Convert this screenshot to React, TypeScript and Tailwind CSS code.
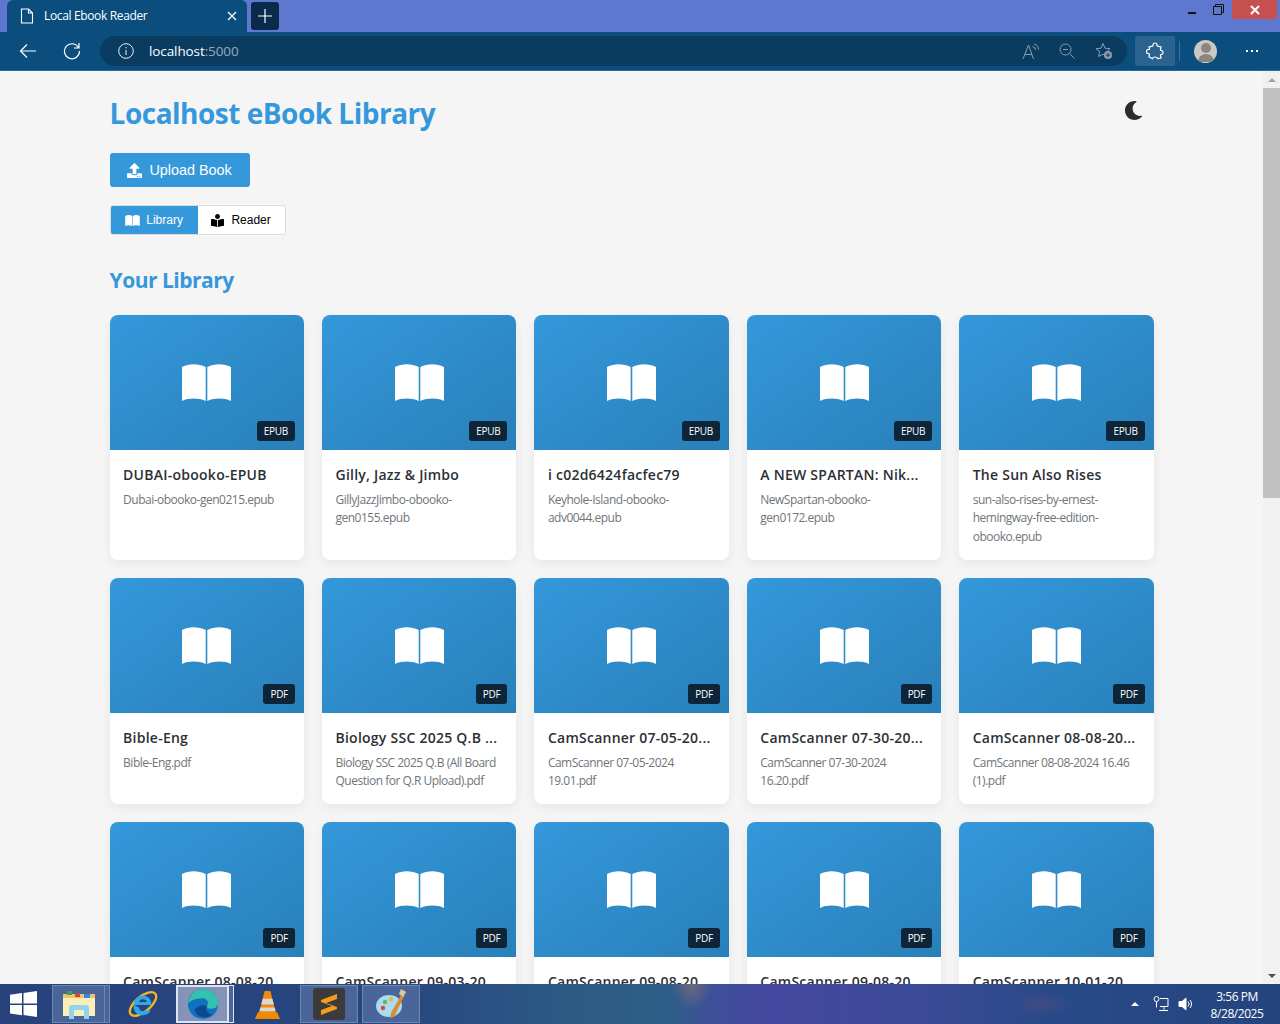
import React from "react";
import { FaBookReader, FaMoon, FaUpload } from "react-icons/fa";

const books = [
  { t: "DUBAI-obooko-EPUB", f: ["Dubai-obooko-gen0215.epub"], k: "EPUB" },
  { t: "Gilly, Jazz & Jimbo", f: ["GillyJazzJimbo-obooko-", "gen0155.epub"], k: "EPUB" },
  { t: "i c02d6424facfec79", f: ["Keyhole-Island-obooko-", "adv0044.epub"], k: "EPUB" },
  { t: "A NEW SPARTAN: Nik...", f: ["NewSpartan-obooko-", "gen0172.epub"], k: "EPUB" },
  { t: "The Sun Also Rises", f: ["sun-also-rises-by-ernest-", "hemingway-free-edition-", "obooko.epub"], k: "EPUB" },
  { t: "Bible-Eng", f: ["Bible-Eng.pdf"], k: "PDF" },
  { t: "Biology SSC 2025 Q.B ...", f: ["Biology SSC 2025 Q.B (All Board", "Question for Q.R Upload).pdf"], k: "PDF" },
  { t: "CamScanner 07-05-20...", f: ["CamScanner 07-05-2024", "19.01.pdf"], k: "PDF" },
  { t: "CamScanner 07-30-20...", f: ["CamScanner 07-30-2024", "16.20.pdf"], k: "PDF" },
  { t: "CamScanner 08-08-20...", f: ["CamScanner 08-08-2024 16.46", "(1).pdf"], k: "PDF" },
  { t: "CamScanner 08-08-20...", f: ["CamScanner 08-08-2024", "16.46.pdf"], k: "PDF" },
  { t: "CamScanner 09-03-20...", f: ["CamScanner 09-03-2024", "10.12.pdf"], k: "PDF" },
  { t: "CamScanner 09-08-20...", f: ["CamScanner 09-08-2024", "11.30.pdf"], k: "PDF" },
  { t: "CamScanner 09-08-20...", f: ["CamScanner 09-08-2024", "11.45.pdf"], k: "PDF" },
  { t: "CamScanner 10-01-20...", f: ["CamScanner 10-01-2024", "09.20.pdf"], k: "PDF" },
];

function BookIcon({ w, h }: { w: number; h: number }) {
  return (
    <svg width={w} height={h} viewBox="0 0 49 37" fill="white">
      <path d="M0 3C7 -.6 16 -.8 23.700 3V37C16 33.800 7 33.800 0 37Z" />
      <path d="M49 3C42 -.6 33 -.8 25.300 3V37C33 33.800 42 33.800 49 37Z" />
    </svg>
  );
}

function Card({ b }: { b: (typeof books)[number] }) {
  return (
    <div className="flex flex-col overflow-hidden rounded-lg bg-white shadow-[0_4px_12px_rgba(0,0,0,0.06)]">
      <div className="relative flex h-[135px] items-center justify-center bg-gradient-to-br from-[#3498db] to-[#2980b9]">
        <BookIcon w={49} h={37} />
        <span className="absolute bottom-[9px] right-[9px] rounded-[3px] bg-[#0e2539] px-[7px] py-[3px] text-[10px] leading-[14px] tracking-[-0.3px] text-white">{b.k}</span>
      </div>
      <div className="flex-1 pb-[13.500px] pl-[13.500px] pr-[10px] pt-[14px]">
        <div className="whitespace-nowrap text-[14px] font-semibold leading-[22px] tracking-[0.25px] text-[#2c3035]">{b.t}</div>
        <div className="mt-[4.800px] text-[12px] leading-[18.500px] tracking-[-0.5px] text-[#70757a]">
          {b.f.map((l, i) => (
            <div key={i} className="whitespace-nowrap">{l}</div>
          ))}
        </div>
      </div>
    </div>
  );
}

function Chrome() {
  return (
    <header className="shrink-0">
      <div className="flex h-[32px] items-end bg-[#5f78cf] pl-[7px] pr-[3px]">
        <div className="flex h-[32px] w-[240px] items-center rounded-t-[6px] bg-[#0b4e7e] pl-[13px] pr-[10px] text-[12px] text-white">
          <svg width="14" height="16" viewBox="0 0 14 16" fill="none" stroke="white" strokeWidth="1.1" className="mr-[10px]">
            <path d="M1.500 1h7l4 4v10h-11zM8.500 1v4h4" />
          </svg>
          <span className="flex-1 tracking-[-0.35px]">Local Ebook Reader</span>
          <svg width="10" height="10" viewBox="0 0 10 10" stroke="white" strokeWidth="1.3">
            <path d="M1 1l8 8M9 1l-8 8" />
          </svg>
        </div>
        <div className="mb-[2px] ml-[4px] flex h-[28px] w-[28px] items-center justify-center rounded-[3px] bg-[#0a2a4b]">
          <svg width="16" height="16" viewBox="0 0 16 16" stroke="white" strokeWidth="1.2"><path d="M8 1v14M1 8h14" /></svg>
        </div>
        <div className="flex-1" />
        <div className="flex h-[32px] items-start">
          <div className="flex h-[19px] w-[47px] items-center justify-center pl-[23px] pt-[6px]">
            <div className="h-[2px] w-[8px] bg-[#111]" />
          </div>
          <div className="flex h-[19px] w-[28px] items-center justify-center">
            <svg width="11" height="11" viewBox="0 0 11 11" fill="none" stroke="#111"><path d="M.5 2.500h8v8h-8zM2.500 2.500v-2h8v8h-2" /></svg>
          </div>
          <div className="flex h-[19px] w-[45px] items-center justify-center bg-[#c75050]">
            <svg width="10" height="10" viewBox="0 0 10 10" stroke="white" strokeWidth="2"><path d="M1 1l8 8M9 1l-8 8" /></svg>
          </div>
        </div>
      </div>
      <div className="flex h-[39px] items-center border-b-[1px] border-[#2a6a99] bg-[#0b4e7e]">
        <div className="flex w-[100px] items-center pl-[19px]">
          <svg width="18" height="16" viewBox="0 0 18 16" fill="none" stroke="white" strokeWidth="1.2"><path d="M17 8H1.500M8 1.500L1.500 8 8 14.500" /></svg>
          <svg width="18" height="18" viewBox="0 0 18 18" fill="none" stroke="white" strokeWidth="1.2" className="ml-[26px]">
            <path d="M15.500 5.500A7.500 7.500 0 1 0 16.500 9M16 1v5h-5" />
          </svg>
        </div>
        <div className="flex h-[30px] w-[1027px] items-center rounded-full bg-[#0a3c62] pl-[18px] pr-[14px]">
          <svg width="16" height="16" viewBox="0 0 16 16" fill="none" stroke="#e8eef3" strokeWidth="1"><circle cx="8" cy="8" r="7.300" /><path d="M8 7v5M8 4v1.400" /></svg>
          <span className="ml-[15px] flex-1 text-[13.500px] leading-[20px] tracking-[-0.1px] text-white">localhost<span className="text-[#9aa8b4]">:5000</span></span>
          <svg width="18" height="17" viewBox="0 0 18 17" fill="none" stroke="#8c9eae" strokeWidth="1"><path d="M1 16L6.500 2l5 14M2.900 11.500h7.200M10.500 3.500a3.500 3.500 0 0 1 3 3.500M12 1a6 6 0 0 1 4.500 5.500" /></svg>
          <svg width="16" height="16" viewBox="0 0 16 16" fill="none" stroke="#8c9eae" strokeWidth="1" className="ml-[19px]"><circle cx="6.500" cy="6.500" r="5.500" /><path d="M4 6.500h5M10.500 10.500l5 5" /></svg>
          <svg width="18" height="18" viewBox="0 0 18 18" fill="none" stroke="#8c9eae" strokeWidth="1" className="ml-[20px]">
            <path d="M8 1.500l2 4.700 5 .5-3.700 3.300 1 5L8 12.200 3.600 14.500l1-5L1 6.700l5-.5z" />
            <circle cx="13" cy="13" r="4" fill="#8c9eae" stroke="none" />
            <path d="M13 10.800v4.400M10.800 13h4.400" stroke="#0a3c62" />
          </svg>
        </div>
        <div className="ml-[8px] flex h-[30px] w-[40px] items-center justify-center rounded-[2px] bg-[#2a6290]">
          <svg width="18" height="18" viewBox="0 0 18 18" fill="none" stroke="white" strokeWidth="1.200">
            <path d="M7 3a2 2 0 0 1 4 0c0 .5 0 1 .5 1.200L15 5l-.6 3c.3.5.8.6 1.300.6a2 2 0 0 1 0 3.800c-.5 0-1 .1-1.300.6l.6 3-3.500.6c-.5-1.200-1.200-1.600-2.500-1.600s-2.200.6-2.500 1.600L3 15l.5-2.600C3.400 12 3 11.700 2.500 11.700a2.100 2.100 0 0 1 0-4.200c.5 0 .9-.2 1-.7L3 5l3.500-.8C7 4 7 3.500 7 3z" />
          </svg>
        </div>
        <div className="ml-[4px] h-[20px] w-[1px] bg-[#3c7197]" />
        <div className="ml-[14px] flex h-[23px] w-[23px] items-end justify-center overflow-hidden rounded-full bg-[#ccc9c5]">
          <div className="flex h-[20px] w-[16px] flex-col items-center">
            <div className="h-[10px] w-[10px] rounded-full bg-[#8b8681]" />
            <div className="mt-[1px] h-[8px] w-[16px] rounded-t-full bg-[#8b8681]" />
          </div>
        </div>
        <div className="ml-[29px] flex gap-[3px]">
          <div className="h-[2px] w-[2px] bg-white" />
          <div className="h-[2px] w-[2px] bg-white" />
          <div className="h-[2px] w-[2px] bg-white" />
        </div>
      </div>
    </header>
  );
}

function Scrollbar() {
  return (
    <div className="flex w-[17px] shrink-0 flex-col items-center bg-[#f1f1f1]">
      <div className="flex h-[17px] items-center">
        <div className="h-0 w-0 border-x-[4px] border-b-[4px] border-x-transparent border-b-[#a3a3a3]" />
      </div>
      <div className="h-[410px] w-full bg-[#c1c1c1]" />
      <div className="flex-1" />
      <div className="flex h-[17px] items-center">
        <div className="h-0 w-0 border-x-[4px] border-t-[4px] border-x-transparent border-t-[#505050]" />
      </div>
    </div>
  );
}

const slot = "flex h-[38px] shrink-0 items-center justify-center";
const pinned = "border border-[#6f86ad] bg-[#49659a]";

function Taskbar() {
  return (
    <footer className="flex h-[40px] shrink-0 items-center bg-[radial-gradient(ellipse_20px_26px_at_692px_0px,#a07a6e88,transparent),radial-gradient(ellipse_30px_12px_at_1042px_20px,#8a4f7a44,transparent),linear-gradient(90deg,#28427c_0%,#28457f_30%,#2b5a85_44%,#2e5f88_52%,#3d4f98_55.500%,#4448a0_60%,#3c4a98_72%,#284a88_82%,#24447e_100%)]">
      <div className="flex w-[52px] shrink-0 items-center justify-center pr-[4px]">
        <svg width="28" height="26" viewBox="0 0 28 26" fill="white"><path d="M0 3.800l12-1.700v10.400H0zM13.500 1.900L27 0v12.500H13.500zM0 14h12v10.300L0 22.600zM13.500 14H27v12l-13.500-1.900z" /></svg>
      </div>
      <div className={`${slot} ${pinned} w-[53px]`}>
        <svg width="34" height="32" viewBox="0 0 34 32">
          <path d="M1 6h32v22H1z" fill="#e9c66e" />
          <path d="M1 10h32v18H1z" fill="#fbeeb8" />
          <path d="M5 3h5v4H5z" fill="#3fa34d" /><path d="M13 5h5v4h-5z" fill="#c9483c" /><path d="M22 6h6v4h-6z" fill="#3b86d8" />
          <path d="M7 31V20a3 3 0 0 1 3-3h14a3 3 0 0 1 3 3v11h-5v-9H12v9z" fill="#8fd4f0" />
        </svg>
      </div>
      <div className="h-[38px] w-[5px] shrink-0 border border-l-0 border-[#6f86ad] bg-[#49659a]" />
      <div className={`${slot} w-[66px]`}>
        <svg width="32" height="34" viewBox="0 0 34 34" fill="none">
          <ellipse cx="17" cy="17" rx="17" ry="8" transform="rotate(-40 17 17)" stroke="#f2b91f" strokeWidth="2.500" />
          <path d="M8 18h18c0-6-4-10-9-10S7 12 7 19s5 10 10 10c4 0 7-2 8-5h-6c-1 1-5 1-6-2v-1z" fill="#2fa8e8" />
          <path d="M13 15c0-2 2-3 4-3s4 1 4 3z" fill="#28427c" />
        </svg>
      </div>
      <div className={`${slot} w-[53px] border-2 border-[#dfe5ee] bg-[#8494b8]`}>
        <svg width="32" height="32" viewBox="0 0 34 34">
          <circle cx="17" cy="17" r="16" fill="#1173bf" />
          <path d="M1 17C2 7 9 1 17 1c9 0 16 7 16 15 0 4-3 6-7 6-3 0-5-1-5-3 3-3 1-8-5-8-7 0-13 3-15 6z" fill="#35c1b0" />
          <path d="M21 19c-2 5 2 9 6 9-6 6-17 3-19-5 3-4 9-6 13-4z" fill="#0b4a8f" />
        </svg>
      </div>
      <div className="h-[38px] w-[5px] shrink-0 border border-l-0 border-[#dfe5ee] bg-[#49659a]" />
      <div className={`${slot} w-[66px]`}>
        <svg width="27" height="31" viewBox="0 0 28 32">
          <path d="M1 31l3-7h20l3 7z" fill="#f08a00" />
          <path d="M11 2h6l6 24H5z" fill="#f58a07" />
          <path d="M9 10h10l1.700 6H7.500zM6.500 19h15l1 4h-17z" fill="#d8d8d8" />
        </svg>
      </div>
      <div className={`${slot} ${pinned} w-[58px]`}>
        <div className="flex h-[32px] w-[32px] items-center justify-center rounded-[3px] bg-[#3b3b3b]">
          <svg width="18" height="22" viewBox="0 0 18 22" fill="#f89a1c"><path d="M1 7l16-6v5L6 10l11 4v2L1 22v-5l11-4L1 9z" /></svg>
        </div>
      </div>
      <div className={`${slot} ${pinned} ml-[4px] w-[58px]`}>
        <svg width="32" height="32" viewBox="0 0 32 32">
          <ellipse cx="14" cy="18" rx="13" ry="11" fill="#a9dcf0" />
          <circle cx="8" cy="20" r="2.200" fill="#d9483c" /><circle cx="10" cy="14" r="2.200" fill="#6cb84c" /><circle cx="16" cy="11" r="2.200" fill="#e8b92c" />
          <path d="M29 2l2 2-12 25-4 1 1-5z" fill="#e08a2c" />
          <path d="M26 1l5 3-3 5-4-3z" fill="#d8c8a0" />
        </svg>
      </div>
      <div className="flex-1" />
      <div className="flex items-center pr-[8px]">
        <div className="h-0 w-0 border-x-[4px] border-b-[4px] border-x-transparent border-b-white" />
        <svg width="16" height="16" viewBox="0 0 16 16" fill="none" stroke="white" className="ml-[14px]">
          <circle cx="3.500" cy="3" r="2.500" fill="#28427c" /><path d="M3.500 5.500v6M7 2.500h8v8H7M11 10.500v3M6 14.500h9" />
        </svg>
        <svg width="16" height="14" viewBox="0 0 16 14" fill="none" stroke="white" className="ml-[9px]">
          <path d="M1 4.500h3L8 1v12L4 9.500H1z" fill="white" /><path d="M10 4.500a3.500 3.500 0 0 1 0 5M12 3a6 6 0 0 1 0 8" />
        </svg>
        <div className="ml-[8px] w-[70px] pt-[2px] text-center font-['Open_Sans',sans-serif] text-[12px] leading-[17px] tracking-[-0.45px] text-white">
          <div>3:56 PM</div>
          <div>8/28/2025</div>
        </div>
      </div>
    </footer>
  );
}

export default function App() {
  return (
    <div className="flex h-[1024px] w-[1280px] flex-col overflow-hidden bg-[#f5f5f5] font-['Open_Sans','Noto_Sans',sans-serif]">
      <Chrome />
      <div className="flex min-h-0 flex-1">
        <main className="min-w-0 flex-1 overflow-hidden pl-[109.600px] pr-[109.400px]">
          <div className="flex items-start justify-between pt-[20px]">
            <h1 className="text-[28px] font-bold leading-[45px] tracking-[-0.5px] text-[#3498db]">Localhost eBook Library</h1>
            <FaMoon className="mr-[11px] mt-[10px] text-[19px] text-[#2c2c2c]" />
          </div>
          <button className="mt-[17px] flex h-[34px] w-[140px] items-center justify-center gap-[7px] rounded-[3px] bg-[#3498db] pt-[1px] font-['Liberation_Sans',sans-serif] text-[14.400px] text-white">
            <FaUpload className="text-[15px]" />
            Upload Book
          </button>
          <div className="mt-[18px] flex h-[30px] w-[176px] overflow-hidden rounded-[3px] border border-[#dddddd] bg-white font-['Liberation_Sans',sans-serif] text-[12px]">
            <div className="flex w-[87px] items-center justify-center gap-[6px] bg-[#3498db] text-white"><BookIcon w={15} h={11} />Library</div>
            <div className="flex flex-1 items-center justify-center gap-[7px] text-black"><FaBookReader className="text-[13px]" />Reader</div>
          </div>
          <h2 className="mt-[29px] text-[21px] font-bold leading-[33px] tracking-[-0.5px] text-[#3498db]">Your Library</h2>
          <div className="mt-[18px] grid grid-cols-5 gap-[18px]">
            {books.map((b, i) => <Card key={i} b={b} />)}
          </div>
        </main>
        <Scrollbar />
      </div>
      <Taskbar />
    </div>
  );
}
